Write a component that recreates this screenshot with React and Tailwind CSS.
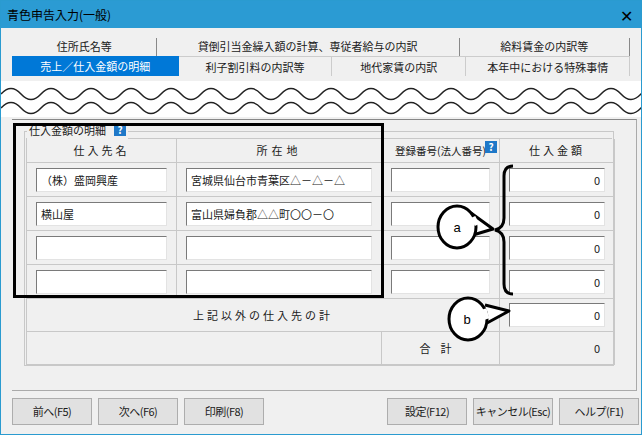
const F = { fontFamily: '"Noto Sans CJK JP", "Noto Sans", sans-serif' };

function Inp({ v, right }) {
  return (
    <div className={`h-[24px] w-full bg-white border border-t-[#7a7a7a] border-l-[#7a7a7a] border-r-[#e3e3e3] border-b-[#e3e3e3] text-[11px] leading-[22px] px-1 ${right ? 'text-right' : ''}`}>{v}</div>
  );
}

function Cell({ children, className = '' }) {
  return <div className={`border-r border-b border-[#c8c8c8] flex items-center px-[9px] ${className}`}>{children}</div>;
}

const rows = [["（株）盛岡興産", "宮城県仙台市青葉区△－△－△"], ["横山屋", "富山県婦負郡△△町〇〇－〇"], ["", ""], ["", ""]];

function Btn({ t, w = 'w-[80px]' }) {
  return <div className={`${w} h-[27px] border border-[#adadad] bg-[#e1e1e1] flex items-center justify-center text-[11px] whitespace-nowrap tracking-[-0.5px]`}>{t}</div>;
}

function wave(y) {
  let d = `M0 ${y}`;
  for (let x = 0; x < 680; x += 40) d += ` q10 -11 20 0 t20 0`;
  return d;
}

export default function App() {
  return (
    <div style={F} className="relative w-[642px] h-[435px] bg-[#f0f0f0] text-[#1a1a1a] overflow-hidden border border-[#2a9bd0]">
      <div className="h-[27px] bg-[#2b9bd3] flex items-center justify-between px-[6px] text-[12px] text-black">
        <span>青色申告入力(一般)</span><span className="text-[16px] font-light mr-[2px]">✕</span>
      </div>
      <div className="px-[11px] pt-[10px]">
        <div className="flex h-[18px] text-[11px] pl-[1px]">
          <div className="w-[145px] text-center border-r border-[#888]">住所氏名等</div>
          <div className="w-[306px] text-center border-r border-[#888]">貸倒引当金繰入額の計算、専従者給与の内訳</div>
          <div className="w-[172px] text-center border-r border-[#888]">給料賃金の内訳等</div>
        </div>
        <div className="flex h-[20px] text-[11px]">
          <div className="w-[168px] bg-[#0078d7] text-white text-center leading-[20px]">売上／仕入金額の明細</div>
          <div className="w-[155px] text-center leading-[20px] border-r border-[#888] border-t border-[#ccc]">利子割引料の内訳等</div>
          <div className="w-[135px] text-center leading-[20px] border-r border-[#888] border-t border-[#ccc]">地代家賃の内訳</div>
          <div className="w-[165px] text-center leading-[20px] border-r border-[#888] border-t border-[#ccc]">本年中における特殊事情</div>
        </div>
      </div>
      <svg className="absolute left-0 top-[78px]" width="642" height="40">
        <rect x="0" y="2" width="642" height="36" fill="#fff" />
        <path d={wave(15)} fill="none" stroke="#222" strokeWidth="1.5" />
        <path d={wave(29)} fill="none" stroke="#222" strokeWidth="1.5" />
      </svg>
      <div className="absolute left-[11px] top-[118px] w-[625px] h-[272px] border-r border-b border-[#aaa] border-t border-t-[#888]">
        <div className="ml-[12px] mt-[11px] w-[590px] border border-[#c8c8c8] relative">
          <div className="absolute -top-[10px] left-[2px] bg-[#f0f0f0] px-[2px] text-[11px] flex items-center gap-[8px]">仕入金額の明細<span className="w-[12px] h-[12px] bg-[#1e78c8] text-white text-[10px] leading-[12px] text-center font-bold">?</span></div>
          <div className="grid grid-cols-[150px_205px_118px_115px] text-[11px] border-t border-l border-[#c8c8c8] mt-[6px] mx-[1px]">
            <Cell className="h-[24px] justify-center tracking-[3px]">仕入先名</Cell>
            <Cell className="h-[24px] justify-center tracking-[4px]">所在地</Cell>
            <Cell className="h-[24px] justify-center text-[10.5px] px-0 relative">登録番号(法人番号)<span className="absolute right-[2px] top-[2px] w-[12px] h-[12px] bg-[#1e78c8] text-white text-[10px] leading-[12px] text-center font-bold">?</span></Cell>
            <Cell className="h-[24px] justify-center tracking-[3px]">仕入金額</Cell>
            {rows.map((r, i) => [
              <Cell key={i + 'a'} className="h-[34px]"><Inp v={r[0]} /></Cell>,
              <Cell key={i + 'b'} className="h-[34px]"><Inp v={r[1]} /></Cell>,
              <Cell key={i + 'c'} className="h-[34px]"><Inp v="" /></Cell>,
              <Cell key={i + 'd'} className="h-[34px]"><Inp v="0" right /></Cell>,
            ])}
            <Cell className="h-[33px] col-span-3 justify-center tracking-[3px]">上記以外の仕入先の計</Cell>
            <Cell className="h-[33px]"><Inp v="0" right /></Cell>
            <Cell className="h-[33px] col-span-2"></Cell>
            <Cell className="h-[33px] justify-center tracking-[10px]">合計</Cell>
            <Cell className="h-[33px] justify-end pr-[14px]">0</Cell>
          </div>
        </div>
      </div>
      <div className="absolute left-[12px] top-[122px] w-[371px] h-[175px] border-[3px] border-black" />
      <svg className="absolute left-0 top-0 pointer-events-none" width="642" height="435">
        <path d="M512 165 q-9 0 -9 10 v42 q0 10 -9 12 q9 2 9 12 v42 q0 10 9 10" fill="none" stroke="#000" strokeWidth="3" />
        <path d="M470 212 l22 16 l-20 6" fill="#fff" stroke="#000" strokeWidth="3" strokeLinejoin="round" />
        <ellipse cx="456" cy="226" rx="19" ry="21" fill="#fff" stroke="#000" strokeWidth="3" />
        <path d="M472 216 l4 8" stroke="#fff" strokeWidth="5" />
        <text x="456" y="231" fontSize="13" textAnchor="middle" fontFamily="Liberation Sans">a</text>
        <path d="M484 304 l24 6 l-22 12" fill="#fff" stroke="#000" strokeWidth="3" strokeLinejoin="round" />
        <ellipse cx="467" cy="318" rx="19" ry="21" fill="#fff" stroke="#000" strokeWidth="3" />
        <path d="M483 308 l3 10" stroke="#fff" strokeWidth="5" />
        <text x="466" y="323" fontSize="13" textAnchor="middle" fontFamily="Liberation Sans">b</text>
      </svg>
      <div className="absolute left-[11px] top-[397px] flex gap-[6px]">
        <Btn t="前へ(F5)" /><Btn t="次へ(F6)" /><Btn t="印刷(F8)" />
      </div>
      <div className="absolute left-[386px] top-[397px] flex gap-[6px]">
        <Btn t="設定(F12)" /><Btn t="キャンセル(Esc)" /><Btn t="ヘルプ(F1)" />
      </div>
    </div>
  );
}
